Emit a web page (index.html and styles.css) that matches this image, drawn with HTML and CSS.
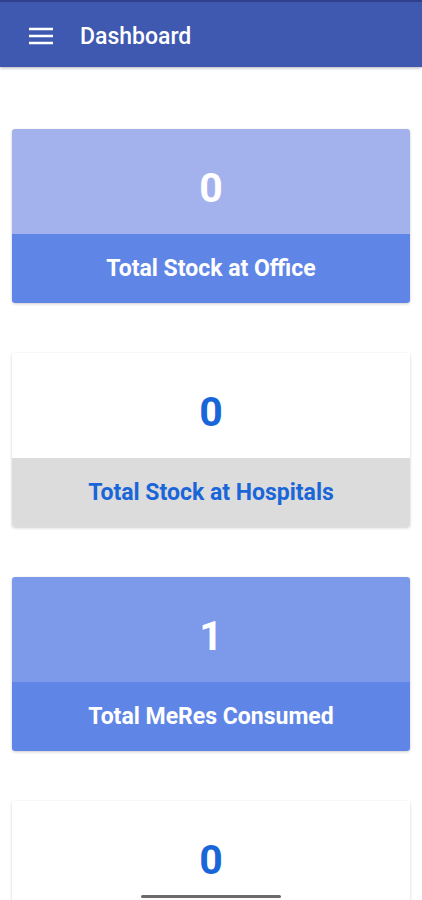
FILE: index.html
```html
<!DOCTYPE html>
<html>
<head>
<meta charset="utf-8">
<link rel="stylesheet" href="styles.css">
</head>
<body>
<header class="appbar">
  <svg class="menu" width="24" height="20" viewBox="0 0 24 20"><path d="M0 3h24M0 10h24M0 17h24" stroke="#fff" stroke-width="2.6"/></svg>
  <span class="title">Dashboard</span>
</header>
<main class="list">
  <section class="card c-office">
    <div class="value">0</div>
    <div class="label">Total Stock at Office</div>
  </section>
  <section class="card c-hosp">
    <div class="value">0</div>
    <div class="label">Total Stock at Hospitals</div>
  </section>
  <section class="card c-meres">
    <div class="value">1</div>
    <div class="label">Total MeRes Consumed</div>
  </section>
  <section class="card c-hosp">
    <div class="value">0</div>
  </section>
</main>
<div class="homebar"></div>
</body>
</html>
```
FILE: styles.css
```css
html, body { margin: 0; padding: 0; }
body {
  width: 422px; height: 900px; overflow: hidden; background: #fff;
  font-family: Roboto, "Noto Sans", sans-serif; position: relative;
}
.appbar {
  height: 65px; background: #3f58b0; border-top: 2px solid #2f408c;
  display: flex; align-items: center; padding-left: 29px; gap: 27px;
  box-shadow: 0 1px 3px rgba(0,0,0,0.3);
}
.menu { display: block; margin-top: 2px; }
.title { color: #fff; font-size: 23px; font-weight: 500; margin-top: 3px; }
.list { display: flex; flex-direction: column; gap: 50px; padding: 62px 12px 0; }
.card {
  border-radius: 3px; overflow: hidden;
  box-shadow: 0 1px 3px rgba(0,0,0,0.2);
  display: flex; flex-direction: column;
}
.value {
  height: 93px; padding-top: 12px; display: flex; align-items: center; justify-content: center;
  font-size: 41px; font-weight: 700;
}
.label {
  height: 69px; display: flex; align-items: center; justify-content: center;
  font-size: 23px; font-weight: 700;
}
.c-office .value { background: #a3b2ed; color: #fff; }
.c-office .label { background: #5f86e6; color: #fff; }
.c-hosp .value { background: #fff; color: #1a66d8; }
.c-hosp .label { background: #dcdcdc; color: #1a66d8; }
.c-meres .value { background: #7d99ea; color: #fff; }
.c-meres .label { background: #5f86e6; color: #fff; }
.homebar {
  position: absolute; left: 141px; bottom: 2px; width: 140px; height: 3px;
  border-radius: 2px; background: #6b6b6b;
}
```
